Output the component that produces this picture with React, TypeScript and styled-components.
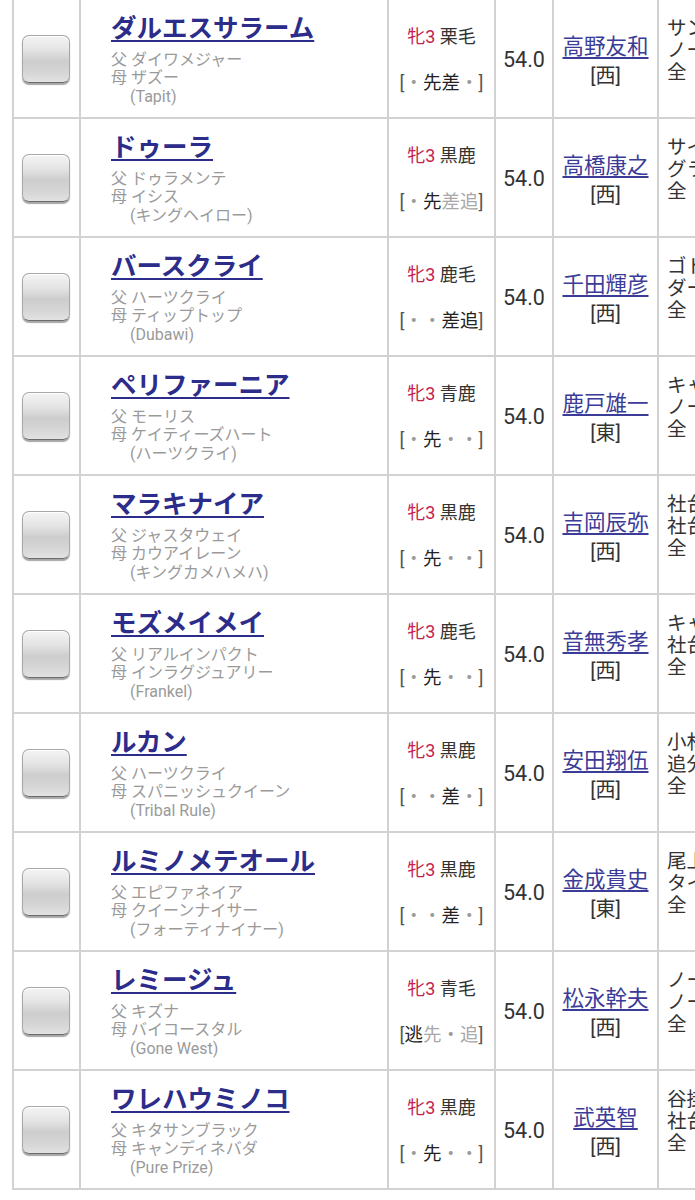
import React from 'react'
import styled, { createGlobalStyle } from 'styled-components'

type Mark = 'on' | 'off' | 'dot'

type Horse = {
  name: string
  sire: string
  dam: string
  damSire: string
  coat: string
  run: Mark[]
  jockey: string
  area: string
  owner: string
  breeder: string
}

const horses: Horse[] = [
  { name: 'ダルエスサラーム', sire: 'ダイワメジャー', dam: 'ザズー', damSire: 'Tapit', coat: '栗毛', run: ['dot', 'on', 'on', 'dot'], jockey: '高野友和', area: '西', owner: 'サンデーレーシング', breeder: 'ノーザンファーム' },
  { name: 'ドゥーラ', sire: 'ドゥラメンテ', dam: 'イシス', damSire: 'キングヘイロー', coat: '黒鹿', run: ['dot', 'on', 'off', 'off'], jockey: '高橋康之', area: '西', owner: 'サイプレスホールディングス', breeder: 'グランド牧場' },
  { name: 'バースクライ', sire: 'ハーツクライ', dam: 'ティップトップ', damSire: 'Dubawi', coat: '鹿毛', run: ['dot', 'dot', 'on', 'on'], jockey: '千田輝彦', area: '西', owner: 'ゴドルフィン', breeder: 'ダーレー・ジャパン・ファーム' },
  { name: 'ペリファーニア', sire: 'モーリス', dam: 'ケイティーズハート', damSire: 'ハーツクライ', coat: '青鹿', run: ['dot', 'on', 'dot', 'dot'], jockey: '鹿戸雄一', area: '東', owner: 'キャロットファーム', breeder: 'ノーザンファーム' },
  { name: 'マラキナイア', sire: 'ジャスタウェイ', dam: 'カウアイレーン', damSire: 'キングカメハメハ', coat: '黒鹿', run: ['dot', 'on', 'dot', 'dot'], jockey: '吉岡辰弥', area: '西', owner: '社台レースホース', breeder: '社台ファーム' },
  { name: 'モズメイメイ', sire: 'リアルインパクト', dam: 'インラグジュアリー', damSire: 'Frankel', coat: '鹿毛', run: ['dot', 'on', 'dot', 'dot'], jockey: '音無秀孝', area: '西', owner: 'キャピタル・システム', breeder: '社台ファーム' },
  { name: 'ルカン', sire: 'ハーツクライ', dam: 'スパニッシュクイーン', damSire: 'Tribal Rule', coat: '黒鹿', run: ['dot', 'dot', 'on', 'dot'], jockey: '安田翔伍', area: '西', owner: '小林英一', breeder: '追分ファーム' },
  { name: 'ルミノメテオール', sire: 'エピファネイア', dam: 'クイーンナイサー', damSire: 'フォーティナイナー', coat: '黒鹿', run: ['dot', 'dot', 'on', 'dot'], jockey: '金成貴史', area: '東', owner: '尾上松寿', breeder: 'タイヘイ牧場' },
  { name: 'レミージュ', sire: 'キズナ', dam: 'バイコースタル', damSire: 'Gone West', coat: '青毛', run: ['on', 'off', 'dot', 'off'], jockey: '松永幹夫', area: '西', owner: 'ノースヒルズ', breeder: 'ノースヒルズ' },
  { name: 'ワレハウミノコ', sire: 'キタサンブラック', dam: 'キャンディネバダ', damSire: 'Pure Prize', coat: '黒鹿', run: ['dot', 'on', 'dot', 'dot'], jockey: '武英智', area: '西', owner: '谷掛龍夫', breeder: '社台ファーム' },
]

const runLabels = ['逃', '先', '差', '追']

const GlobalStyle = createGlobalStyle`
  html, body {
    margin: 0;
    padding: 0;
    background: #fff;
    overflow: hidden;
  }
  body {
    font-family: Roboto, "Noto Sans CJK JP", sans-serif;
    color: #333;
  }
`

const Page = styled.div`
  padding-left: 12px;
  width: 800px;
`

const Table = styled.div`
  display: flex;
  flex-direction: column;
  border-left: 2px solid #d2d2d2;
`

const Row = styled.div`
  display: grid;
  grid-template-columns: 67px 308px 107px 58px 105px 140px;
  height: 119px;
`

const Cell = styled.div`
  border-right: 2px solid #d2d2d2;
  border-bottom: 2px solid #d2d2d2;
  display: flex;
  flex-direction: column;
  justify-content: center;
  align-items: center;
  overflow: hidden;
`

const CheckCell = styled(Cell)`
  padding-right: 2px;
`

const CheckBox = styled.div`
  width: 48px;
  height: 48px;
  box-sizing: border-box;
  border-radius: 7px;
  border: 1px solid #a8a8a8;
  border-bottom-color: #6c6c6c;
  background: linear-gradient(#f4f4f4 0%, #e4e4e4 30%, #cdcdcd 55%, #d6d6d6 80%, #e2e2e2 100%);
  box-shadow: 0 2px 1px rgba(0, 0, 0, 0.35), inset 0 1px 0 #fff;
`

const NameCell = styled(Cell)`
  align-items: flex-start;
  padding-left: 30px;
`

const HorseName = styled.a`
  font-size: 25.5px;
  font-weight: 700;
  line-height: 34px;
  color: #2c2c8a;
  text-decoration: underline;
  text-decoration-thickness: 2px;
  text-underline-offset: 3px;
  margin-bottom: 6px;
  white-space: nowrap;
`

const Pedigree = styled.div`
  font-size: 16px;
  line-height: 18.5px;
  color: #9a9a9a;
  white-space: nowrap;
`

const DamSire = styled(Pedigree)`
  padding-left: 19px;
`

const SexCell = styled(Cell)`
  gap: 22px;
  padding-top: 2px;
`

const SexLine = styled.div`
  font-size: 18px;
  line-height: 24px;
  color: #333;
  white-space: nowrap;
`

const Sex = styled.span`
  color: #c3234f;
`

const RunLine = styled.div`
  font-size: 18.5px;
  line-height: 24px;
  color: #555;
  white-space: nowrap;
`

const RunMark = styled.span<{ $mark: Mark }>`
  color: ${p => (p.$mark === 'on' ? '#222' : p.$mark === 'off' ? '#a8a8a8' : '#9c9c9c')};
`

const WeightCell = styled(Cell)`
  font-size: 21.5px;
  color: #333;
  padding-top: 1px;
`

const JockeyCell = styled(Cell)`
  gap: 4px;
  padding-top: 6px;
`

const Jockey = styled.a`
  font-size: 21.5px;
  line-height: 24px;
  color: #3b3b98;
  text-decoration: underline;
  text-underline-offset: 3px;
  white-space: nowrap;
`

const Area = styled.div`
  font-size: 20px;
  line-height: 26px;
  color: #333;
`

const OwnerCell = styled(Cell)`
  justify-content: flex-start;
  align-items: flex-start;
  padding: 18px 0 0 8px;
`

const OwnerLine = styled.div`
  font-size: 19.5px;
  line-height: 22px;
  color: #333;
  white-space: nowrap;
`

const App = () => {
  return (
    <Page>
      <GlobalStyle />
      <Table>
        {horses.map(h => (
          <Row key={h.name}>
            <CheckCell>
              <CheckBox />
            </CheckCell>
            <NameCell>
              <HorseName>{h.name}</HorseName>
              <Pedigree>父 {h.sire}</Pedigree>
              <Pedigree>母 {h.dam}</Pedigree>
              <DamSire>({h.damSire})</DamSire>
            </NameCell>
            <SexCell>
              <SexLine>
                <Sex>牝3</Sex> {h.coat}
              </SexLine>
              <RunLine>
                [
                {h.run.map((m, i) => (
                  <RunMark key={i} $mark={m}>{m === 'dot' ? '・' : runLabels[i]}</RunMark>
                ))}
                ]
              </RunLine>
            </SexCell>
            <WeightCell>54.0</WeightCell>
            <JockeyCell>
              <Jockey>{h.jockey}</Jockey>
              <Area>[{h.area}]</Area>
            </JockeyCell>
            <OwnerCell>
              <OwnerLine>{h.owner}</OwnerLine>
              <OwnerLine>{h.breeder}</OwnerLine>
              <OwnerLine>全</OwnerLine>
            </OwnerCell>
          </Row>
        ))}
      </Table>
    </Page>
  )
}

export default App
